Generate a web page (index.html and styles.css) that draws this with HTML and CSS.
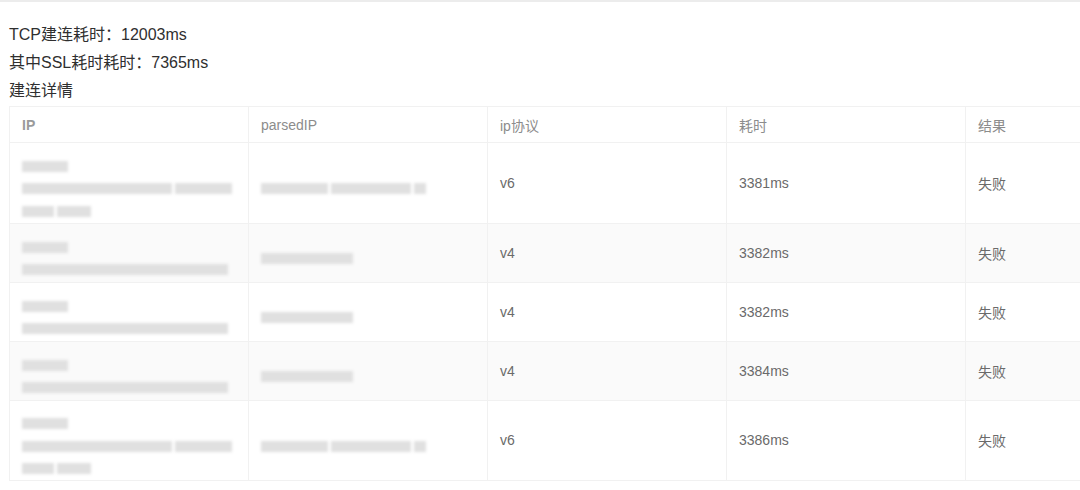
FILE: index.html
```html
<!DOCTYPE html>
<html lang="zh">
<head>
<meta charset="utf-8">
<link rel="stylesheet" href="styles.css">
</head>
<body>
<div class="page">
  <div class="summary">
    <p class="line">TCP建连耗时：12003ms</p>
    <p class="line">其中SSL耗时耗时：7365ms</p>
    <p class="line">建连详情</p>
  </div>
  <table class="grid">
    <thead>
      <tr class="head">
        <th>IP</th><th>parsedIP</th><th>ip协议</th><th>耗时</th><th>结果</th>
      </tr>
    </thead>
    <tbody>
      <tr class="tall">
        <td class="masked">
          <div class="mline"><span class="bar w46"></span></div>
          <div class="mline"><span class="bar w150"></span><span class="bar w57"></span></div>
          <div class="mline"><span class="bar w32"></span><span class="bar w34"></span></div>
        </td>
        <td class="masked">
          <div class="mline"><span class="bar w67"></span><span class="bar w80"></span><span class="bar w12"></span></div>
        </td>
        <td>v6</td><td>3381ms</td><td>失败</td>
      </tr>
      <tr class="short alt">
        <td class="masked">
          <div class="mline"><span class="bar w46"></span></div>
          <div class="mline"><span class="bar w206"></span></div>
        </td>
        <td class="masked"><div class="mline"><span class="bar w92"></span></div></td>
        <td>v4</td><td>3382ms</td><td>失败</td>
      </tr>
      <tr class="short">
        <td class="masked">
          <div class="mline"><span class="bar w46"></span></div>
          <div class="mline"><span class="bar w206"></span></div>
        </td>
        <td class="masked"><div class="mline"><span class="bar w92"></span></div></td>
        <td>v4</td><td>3382ms</td><td>失败</td>
      </tr>
      <tr class="short alt">
        <td class="masked">
          <div class="mline"><span class="bar w46"></span></div>
          <div class="mline"><span class="bar w206"></span></div>
        </td>
        <td class="masked"><div class="mline"><span class="bar w92"></span></div></td>
        <td>v4</td><td>3384ms</td><td>失败</td>
      </tr>
      <tr class="tall">
        <td class="masked">
          <div class="mline"><span class="bar w46"></span></div>
          <div class="mline"><span class="bar w150"></span><span class="bar w57"></span></div>
          <div class="mline"><span class="bar w32"></span><span class="bar w34"></span></div>
        </td>
        <td class="masked">
          <div class="mline"><span class="bar w67"></span><span class="bar w80"></span><span class="bar w12"></span></div>
        </td>
        <td>v6</td><td>3386ms</td><td>失败</td>
      </tr>
    </tbody>
  </table>
</div>
</body>
</html>
```

FILE: styles.css
```css
html, body {
  margin: 0;
  padding: 0;
  background: #ffffff;
  overflow: hidden;
}

body {
  width: 1080px;
  height: 490px;
  font-family: "Liberation Sans", "Noto Sans CJK SC", sans-serif;
  color: #333333;
}

.page {
  border-top: 2px solid #ececec;
  padding: 19px 0 0 9px;
}

.summary {
  display: flex;
  flex-direction: column;
}

.line {
  margin: 0;
  font-size: 16px;
  line-height: 28px;
  color: #2f2f2f;
}

.grid {
  margin-top: 1px;
  width: 1196px;
  table-layout: fixed;
  border-collapse: collapse;
  border: 1px solid #eeeeee;
  font-size: 14px;
  color: #6a6a6a;
}

.grid th,
.grid td {
  border: 1px solid #f1f1f1;
  padding: 0 12px;
  text-align: left;
  vertical-align: middle;
}

.grid th {
  font-weight: normal;
  color: #8c8c8c;
}

.grid th:first-child {
  font-weight: bold;
  color: #9a9a9a;
}

.head { height: 36px; }
.tall { height: 80px; }
.short { height: 59px; }
.alt td { background: #fafafa; }

.grid td.masked {
  padding-top: 12px;
  padding-bottom: 0;
}

.mline {
  display: flex;
  gap: 3px;
  height: 22.5px;
  align-items: center;
}

.bar {
  display: block;
  height: 11px;
  background: #e0e0e0;
  filter: blur(1.8px);
}

.w12 { width: 12px; }
.w32 { width: 32px; }
.w34 { width: 34px; }
.w46 { width: 46px; }
.w57 { width: 57px; }
.w67 { width: 67px; }
.w80 { width: 80px; }
.w92 { width: 92px; }
.w150 { width: 150px; }
.w206 { width: 206px; }
```
